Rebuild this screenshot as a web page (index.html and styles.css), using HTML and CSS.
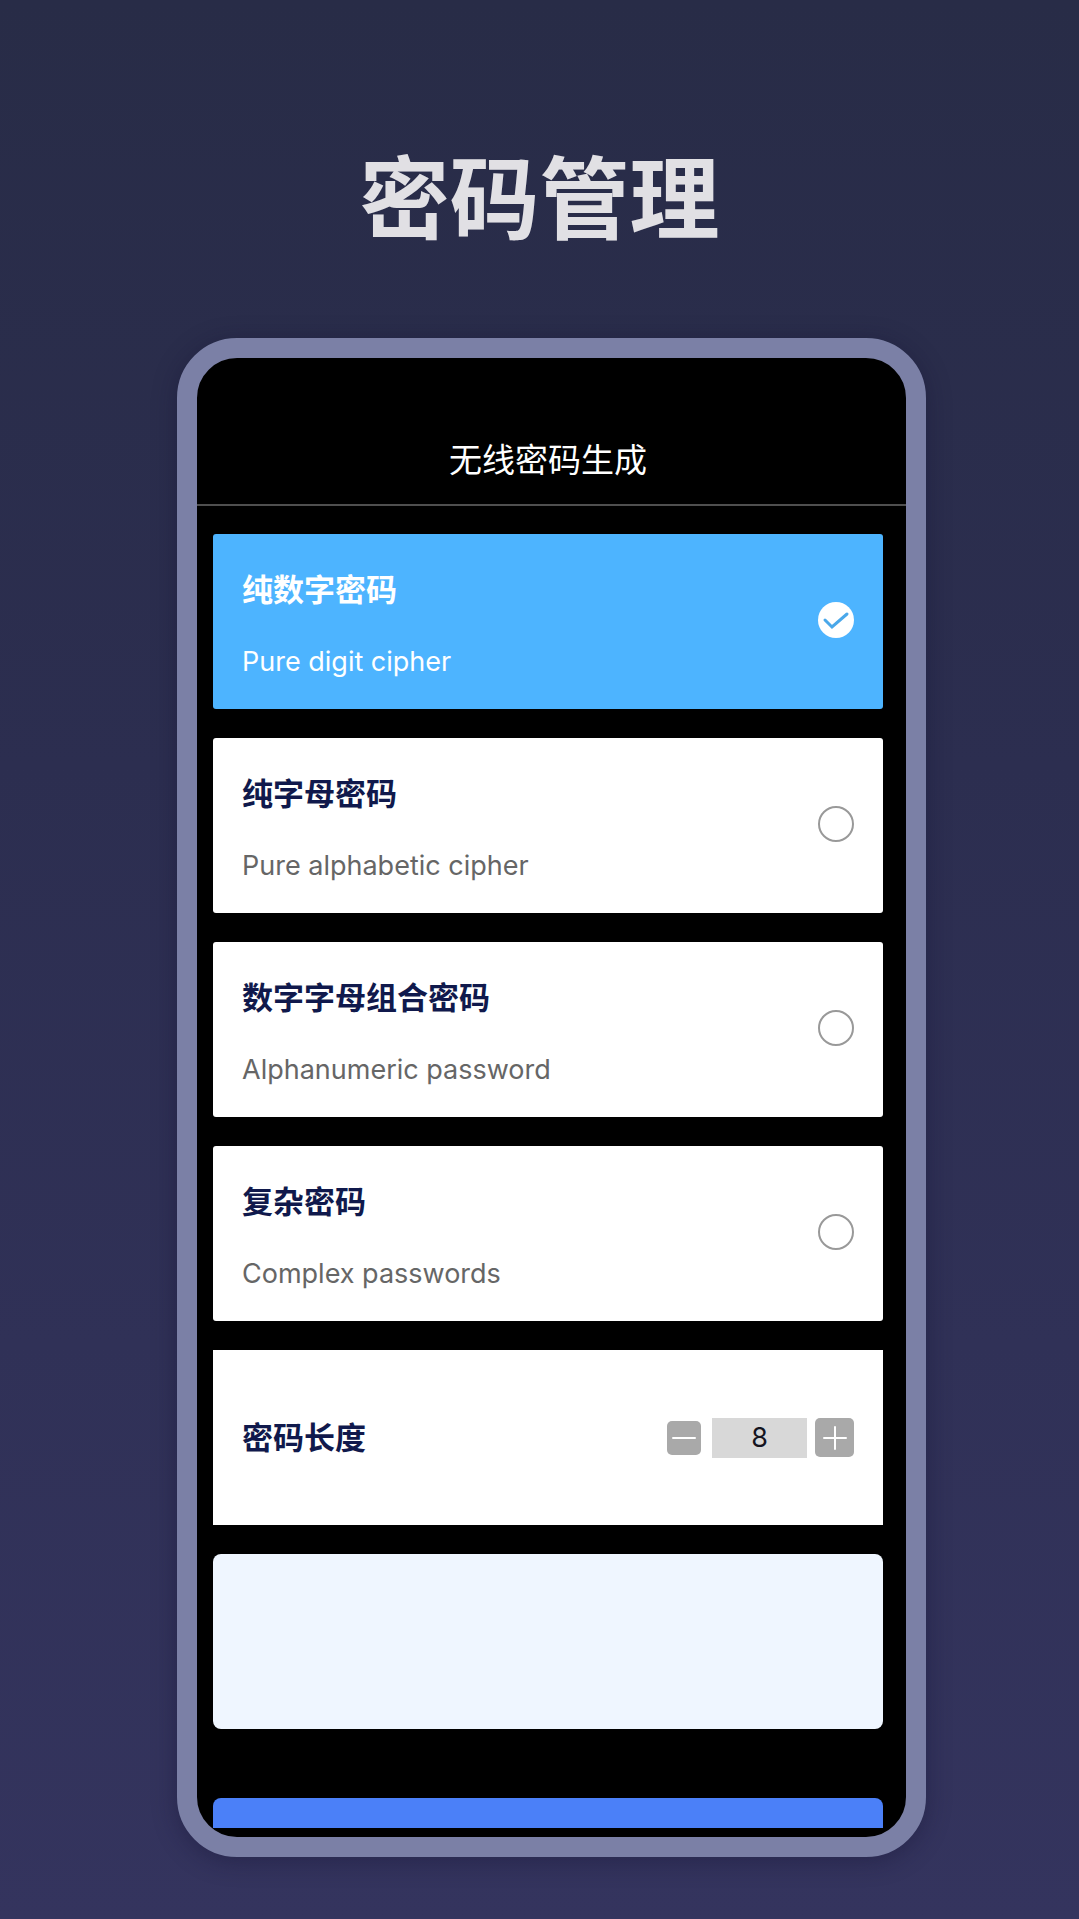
FILE: index.html
```html
<!DOCTYPE html>
<html lang="zh-CN">
<head>
<meta charset="utf-8">
<meta name="viewport" content="width=device-width, initial-scale=1">
<title>密码管理</title>
<link rel="stylesheet" href="styles.css">
</head>
<body class="page">
<h1 class="page-title">密码管理</h1>
<main class="phone">
  <header class="app-bar"><h2 class="app-title">无线密码生成</h2></header>
  <form class="form">
    <label class="card option">
      <span class="option-text">
        <span class="name">纯数字密码</span>
        <span class="note">Pure digit cipher</span>
      </span>
      <input class="radio" type="radio" name="kind" checked>
    </label>
    <label class="card option">
      <span class="option-text">
        <span class="name">纯字母密码</span>
        <span class="note">Pure alphabetic cipher</span>
      </span>
      <input class="radio" type="radio" name="kind">
    </label>
    <label class="card option">
      <span class="option-text">
        <span class="name">数字字母组合密码</span>
        <span class="note">Alphanumeric password</span>
      </span>
      <input class="radio" type="radio" name="kind">
    </label>
    <label class="card option">
      <span class="option-text">
        <span class="name">复杂密码</span>
        <span class="note">Complex passwords</span>
      </span>
      <input class="radio" type="radio" name="kind">
    </label>
    <div class="card length">
      <label class="name" for="length">密码长度</label>
      <div class="stepper">
        <button class="step minus" type="button" aria-label="减少">
          <svg width="26" height="26" viewBox="0 0 26 26"><path d="M2 13H24"/></svg>
        </button>
        <input class="count" id="length" type="text" inputmode="numeric" value="8">
        <button class="step plus" type="button" aria-label="增加">
          <svg width="26" height="26" viewBox="0 0 26 26"><path d="M2 13H24M13 2V24"/></svg>
        </button>
      </div>
    </div>
    <output class="card result" for="length"></output>
    <button class="submit" type="button" aria-label="生成密码"></button>
  </form>
</main>
</body>
</html>
```
FILE: styles.css
```css
* {
  box-sizing: border-box;
}

.page {
  margin: 0;
  min-height: 100vh;
  padding: 128px 153px 62px 177px;
  background: linear-gradient(#282c47, #2c2e50 40%, #34345e);
  font-family: "Noto Sans CJK SC", sans-serif;
}

.page-title {
  margin: 0 0 80px -24px;
  color: #e1e0e4;
  font-size: 90px;
  line-height: 130px;
  font-weight: 700;
  text-align: center;
}

.phone {
  overflow: hidden;
  border: 20px solid #7b80a6;
  border-radius: 60px;
  background: #000;
  box-shadow: 0 4px 24px rgba(20, 18, 50, 0.4);
}

.app-bar {
  padding: 76px 23px 22px 16px;
  border-bottom: 2px solid #4f4f4f;
}

.app-title {
  margin: 0;
  color: #fff;
  font-size: 33px;
  line-height: 48px;
  font-weight: 400;
  text-align: center;
}

.form {
  display: flex;
  flex-direction: column;
  gap: 29px;
  padding: 28px 23px 9px 16px;
}

.card {
  display: flex;
  align-items: center;
  justify-content: space-between;
  min-height: 175px;
  padding: 0 29px;
  background: #fff;
}

.option {
  padding: 34px 29px 27px;
  border-radius: 3px;
}

.option-text {
  display: flex;
  flex-direction: column;
  gap: 34px;
}

.name {
  color: #10194c;
  font-size: 31px;
  line-height: 40px;
  font-weight: 600;
}

.length .name {
  padding-bottom: 3px;
}

.note {
  color: #666;
  font-family: Inter, "Noto Sans CJK SC", sans-serif;
  font-size: 27px;
  line-height: 40px;
}

.radio {
  flex: none;
  appearance: none;
  width: 36px;
  height: 36px;
  margin: 0 0 10px;
  border: 2px solid #999;
  border-radius: 50%;
}

.radio:checked {
  border: 0;
  background: #fff url("data:image/svg+xml,%3Csvg xmlns='http://www.w3.org/2000/svg' viewBox='0 0 36 36'%3E%3Cpath d='M7 18L14 25L29 12' fill='none' stroke='%234aa8ea' stroke-width='3' stroke-linecap='round'/%3E%3C/svg%3E") center / 36px 36px;
}

.option:has(.radio:checked) {
  background: #4db4ff;
}

.option:has(.radio:checked) .name,
.option:has(.radio:checked) .note {
  color: #fff;
}

.stepper {
  display: flex;
  align-items: center;
}

.step {
  display: flex;
  align-items: center;
  justify-content: center;
  padding: 0;
  border: 0;
  border-radius: 5px;
  background: #a9a9a9;
}

.step svg {
  fill: none;
  stroke: #fff;
  stroke-width: 2;
  stroke-linecap: round;
}

.minus {
  width: 34px;
  height: 34px;
}

.plus {
  width: 39px;
  height: 39px;
}

.count {
  width: 95px;
  height: 40px;
  margin: 0 8px 0 11px;
  padding: 0;
  border: 0;
  background: #d8d8d8;
  color: #14141f;
  font-family: Inter, "Noto Sans CJK SC", sans-serif;
  font-size: 27px;
  text-align: center;
}

.result {
  border-radius: 8px;
  background: #eff6ff;
}

.submit {
  height: 30px;
  margin-top: 40px;
  border: 0;
  border-radius: 8px 8px 0 0;
  background: #4b80f8;
}
```
